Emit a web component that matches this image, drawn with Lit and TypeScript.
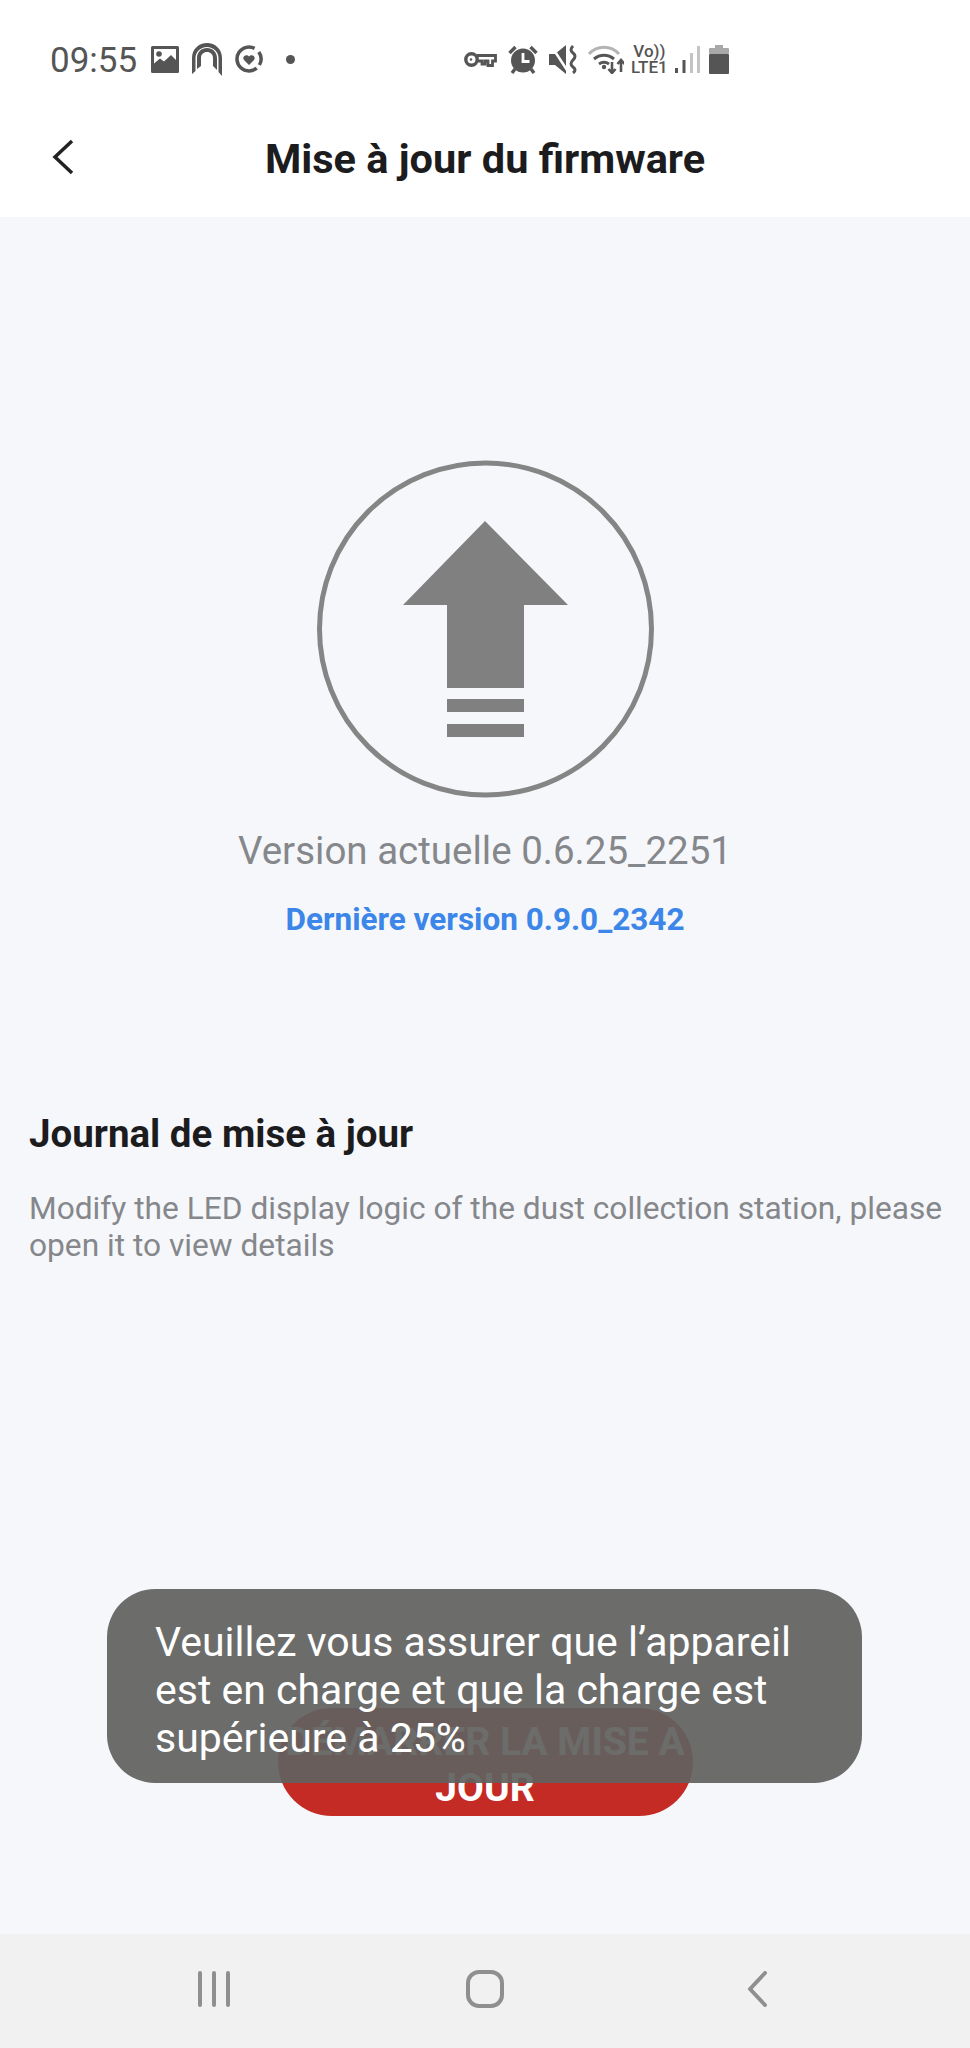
import { LitElement, html, css, svg } from "lit";
import { customElement } from "lit/decorators.js";

const imageIcon = svg`<svg width="28" height="27" viewBox="0 0 28 27"><path fill="#555" fill-rule="evenodd" d="M1.500 0h25A1.500 1.500 0 0 1 28 1.500v24a1.500 1.500 0 0 1-1.500 1.500h-25A1.500 1.500 0 0 1 0 25.500v-24A1.500 1.500 0 0 1 1.500 0zM3 3v14.500l6-5 4 3 7-6.500 5 5V3z"/><circle cx="8" cy="8" r="2.800" fill="#555"/></svg>`;
const archIcon = svg`<svg width="30" height="33" viewBox="0 0 30 33"><path fill="#555" d="M0 31V15C0 6 7 0 15 0s15 6 15 15v18l-3.500-4V15c0-6-5-11-11.500-11S3.500 9 3.500 15v13z"/><path fill="#555" d="M5 26V15c0-6 4.500-10 10-10s10 4 10 10v12l-4-4V15c0-3.500-2.500-6-6-6s-6 2.500-6 6v8z"/></svg>`;
const heartIcon = svg`<svg width="28" height="28" viewBox="0 0 28 28" fill="none"><path stroke="#555" stroke-width="3.500" d="M21.700 23.200A12 12 0 1 1 19.600 3.400"/><path stroke="#555" stroke-width="3.500" d="M23.800 7.100a12 12 0 0 1 .6 12.900"/><path fill="#555" d="M14 20l-5-5c-2.500-3.500 2.500-6.500 5-3.500 2.500-3 7.500 0 5 3.500z"/></svg>`;
const keyIcon = svg`<svg width="33" height="15" viewBox="0 0 33 15" fill="none" stroke="#555"><circle cx="7.500" cy="7.500" r="5.700" stroke-width="3.400"/><path stroke-width="2.800" d="M13 3.500h18.500v5.500h-3v4.500h-4.500V9h-3v3h-3V9h-5.500"/><circle cx="7" cy="7.500" r="1.200" fill="#555" stroke="none"/></svg>`;
const alarmIcon = svg`<svg width="30" height="29" viewBox="0 0 30 29"><path d="M1.500 8l6-6M28.500 8l-6-6M7 24l-3 4M23 24l3 4" stroke="#555" stroke-width="3.400"/><circle cx="15" cy="15.500" r="12" fill="#555"/><path d="M15 8v8.500h6.500" fill="none" stroke="#fff" stroke-width="2.800"/></svg>`;
const muteIcon = svg`<svg width="28" height="29" viewBox="0 0 28 29"><path fill="#555" d="M0 9h6l11-9v29L6 20H0z"/><path d="M3 2l15 23" stroke="#fff" stroke-width="2.500"/><path d="M24 1q-4 4 0 7t0 7 0 7 0 6" fill="none" stroke="#555" stroke-width="3"/></svg>`;
const wifiIcon = svg`<svg width="36" height="29" viewBox="0 0 36 29" fill="none"><path stroke="#b4b4b4" stroke-width="3" d="M1 9c8-9 22-9 30 0"/><path stroke="#555" stroke-width="3" d="M6 14c6-5 14-5 20 0M11 19c3-2 7-2 10 0"/><circle cx="16" cy="22" r="2.200" fill="#555"/><path stroke="#555" stroke-width="2.600" d="M24 17v11m-3.500-4l3.500 4 3.500-4M33 27V15m-3.500 4l3.500-4 3.500 4"/></svg>`;
const signalIcon = svg`<svg width="25" height="28" viewBox="0 0 25 28"><rect x="0" y="23" width="3" height="5" fill="#555"/><rect x="7.500" y="15" width="3" height="13" fill="#555"/><rect x="15" y="8" width="3" height="20" fill="#c4c4c4"/><rect x="22" y="1" width="3" height="27" fill="#c4c4c4"/></svg>`;
const batteryIcon = svg`<svg width="20" height="29" viewBox="0 0 20 29"><path fill="#a8a8a8" d="M6 0h8v4H6z"/><rect x="0" y="3" width="20" height="6" rx="1" fill="#a8a8a8"/><rect x="0" y="9" width="20" height="20" rx="1" fill="#555"/></svg>`;

@customElement("app-root")
export class AppRoot extends LitElement {
  static styles = css`
    :host {
      display: block;
      font-family: Roboto, "Liberation Sans", sans-serif;
    }

    .page {
      position: relative;
      display: flex;
      flex-direction: column;
      width: 970px;
      height: 2048px;
      overflow: hidden;
      background: #f5f7fb;
    }

    .status {
      display: flex;
      align-items: center;
      height: 120px;
      box-sizing: border-box;
      padding: 0 0 2px 50px;
      background: #fff;
      color: #555;
    }

    .time {
      margin-top: 2px;
      font-size: 35px;
      width: 101px;
    }

    .left-icons {
      display: flex;
      align-items: center;
      gap: 13px;
      width: 313px;
    }

    .dot {
      width: 9px;
      height: 9px;
      margin-left: 10px;
      border-radius: 50%;
      background: #555;
    }

    .right-icons {
      display: flex;
      align-items: center;
      gap: 11px;
    }

    .volte {
      display: flex;
      flex-direction: column;
      align-items: center;
      margin: 0 -4px;
      font-size: 17px;
      line-height: 16px;
      font-weight: 500;
    }

    .battery {
      display: flex;
      margin-left: -2px;
    }

    .header {
      display: flex;
      align-items: center;
      justify-content: center;
      position: relative;
      height: 97px;
      box-sizing: border-box;
      padding-bottom: 20px;
      background: #fff;
    }

    .back {
      position: absolute;
      left: 52px;
      top: 19px;
    }

    .title {
      font-size: 41.5px;
      font-weight: 700;
      color: #1c1c1e;
    }

    .hero {
      display: flex;
      flex-direction: column;
      align-items: center;
      padding-top: 243px;
    }

    .current {
      margin-top: 30px;
      font-size: 38.5px;
      line-height: 46px;
      color: #85878b;
    }

    .latest {
      margin-top: 26px;
      font-size: 31.5px;
      line-height: 40px;
      font-weight: 700;
      color: #3b86e8;
    }

    .log {
      padding: 171px 10px 0 29px;
    }

    .log h2 {
      margin: 0;
      font-size: 38.5px;
      line-height: 46px;
      font-weight: 700;
      color: #1c1c1e;
    }

    .log p {
      margin: 33px 0 0;
      font-size: 31.7px;
      line-height: 37px;
      color: #85878b;
    }

    .spacer {
      flex: 1;
    }

    .update {
      align-self: center;
      width: 415px;
      box-sizing: border-box;
      padding: 11px 4px 5px;
      margin-bottom: 118px;
      border: none;
      border-radius: 54px;
      background: #c52b25;
      color: #fff;
      font-family: inherit;
      font-size: 39px;
      line-height: 46px;
      font-weight: 700;
      text-align: center;
    }

    .nav {
      display: flex;
      align-items: center;
      justify-content: space-between;
      height: 114px;
      box-sizing: border-box;
      padding: 0 203px 4px 197px;
      background: #f1f1f1;
    }

    .home {
      margin-right: 8px;
    }

    .toast {
      position: absolute;
      left: 107px;
      top: 1589px;
      width: 755px;
      height: 194px;
      box-sizing: border-box;
      padding: 29px 40px 0 48px;
      border-radius: 48px;
      background: rgba(97, 97, 96, 0.93);
      color: #fff;
      font-size: 41px;
      line-height: 48px;
    }
  `;

  render() {
    return html`<div class="page">
      <div class="status">
        <div class="time">09:55</div>
        <div class="left-icons">${imageIcon}${archIcon}${heartIcon}<span class="dot"></span></div>
        <div class="right-icons">
          ${keyIcon}${alarmIcon}${muteIcon}${wifiIcon}
          <div class="volte"><span>Vo))</span><span>LTE1</span></div>
          ${signalIcon}
          <span class="battery">${batteryIcon}</span>
        </div>
      </div>
      <div class="header">
        <svg class="back" width="22" height="36" viewBox="0 0 22 36" fill="none" stroke="#222" stroke-width="3.5">
          <path d="M20 2L3 18l17 16" />
        </svg>
        <div class="title">Mise à jour du firmware</div>
      </div>
      <div class="hero">
        <svg width="338" height="338" viewBox="0 0 338 338">
          <circle cx="169.5" cy="169" r="166" fill="none" stroke="#858585" stroke-width="5" />
          <path fill="#808080" d="M169 61l83 84h-44v83h-77v-83H87z" />
          <path fill="#808080" d="M131 239h77v13h-77zM131 264h77v13h-77z" />
        </svg>
        <div class="current">Version actuelle 0.6.25_2251</div>
        <div class="latest">Dernière version 0.9.0_2342</div>
      </div>
      <div class="log">
        <h2>Journal de mise à jour</h2>
        <p>Modify the LED display logic of the dust collection station, please open it to view details</p>
      </div>
      <div class="spacer"></div>
      <button class="update">DÉMARRER LA MISE A JOUR</button>
      <div class="nav">
        <svg width="34" height="36" viewBox="0 0 34 36" stroke="#8f8f8f" stroke-width="4" stroke-linecap="round">
          <path d="M3 2v32M17 2v32M31 2v32" />
        </svg>
        <svg class="home" width="38" height="38" viewBox="0 0 38 38" fill="none">
          <rect x="2" y="2" width="34" height="34" rx="11" stroke="#8f8f8f" stroke-width="4" />
        </svg>
        <svg width="20" height="36" viewBox="0 0 20 36" fill="none" stroke="#8f8f8f" stroke-width="4" stroke-linecap="round" stroke-linejoin="round">
          <path d="M18 2L3 18l15 16" />
        </svg>
      </div>
      <div class="toast">Veuillez vous assurer que l’appareil est en charge et que la charge est supérieure à 25%</div>
    </div>`;
  }
}
